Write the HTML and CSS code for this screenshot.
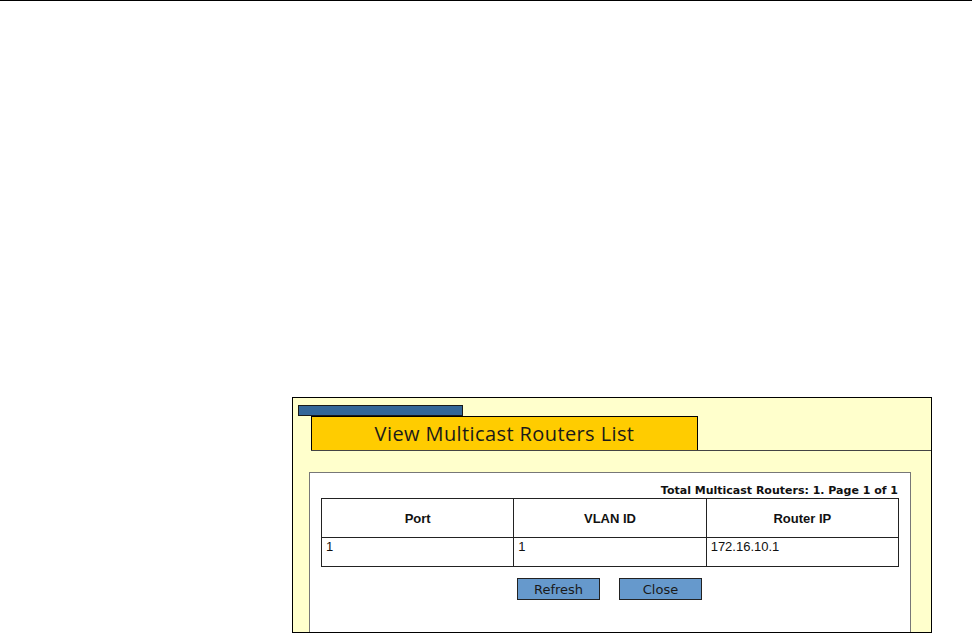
FILE: index.html
```
<!DOCTYPE html>
<html lang="en">
<head>
    <meta charset="UTF-8">
    <title>View Multicast Routers List</title>
    <link rel="stylesheet" href="styles.css">
</head>
<body>
    <div class="top-rule"></div>

    <div class="page">
        <div class="dialog">
            <div class="dialog-bar"></div>
            <div class="dialog-head">
                <div class="dialog-tab">View Multicast Routers List</div>
            </div>

            <div class="panel">
                <div class="total">Total Multicast Routers: 1. Page 1 of 1</div>
                <table class="routers">
                    <thead>
                        <tr>
                            <th>Port</th>
                            <th>VLAN ID</th>
                            <th>Router IP</th>
                        </tr>
                    </thead>
                    <tbody>
                        <tr>
                            <td>1</td>
                            <td>1</td>
                            <td>172.16.10.1</td>
                        </tr>
                    </tbody>
                </table>
                <div class="actions">
                    <button>Refresh</button>
                    <button>Close</button>
                </div>
            </div>
        </div>
    </div>
</body>
</html>
```

FILE: styles.css
```
body {
    margin: 0;
    background: #ffffff;
    font-family: 'Liberation Sans', Arial, sans-serif;
    color: #111111;
}

.top-rule {
    height: 1px;
    background: #000000;
}

.page {
    padding: 396px 0 0 292px;
}

.dialog {
    width: 638px;
    height: 234px;
    background: #ffffcc;
    border: 1px solid #000000;
    overflow: hidden;
}

.dialog-bar {
    width: 163px;
    height: 9px;
    margin: 7px 0 0 5px;
    background: #336699;
    border: 1px solid #1a1a1a;
}

.dialog-head {
    margin-left: 18px;
    border-bottom: 1px solid #444444;
}

.dialog-tab {
    width: 385px;
    height: 33px;
    line-height: 33px;
    background: #ffcc00;
    border: 1px solid #000000;
    border-bottom: none;
    text-align: center;
    font-family: 'Open Sans', sans-serif;
    font-size: 20px;
    letter-spacing: 0.4px;
    color: #1a1a1a;
}

.panel {
    margin: 21px 20px 0 16px;
    height: 200px;
    background: #ffffff;
    border: 1px solid #777777;
    border-bottom: none;
    padding: 11px 10px 0 11px;
}

.total {
    width: 577px;
    text-align: right;
    font-family: 'DejaVu Sans', Verdana, sans-serif;
    font-weight: bold;
    font-size: 11px;
    line-height: 14px;
}

/* tabla de routers */
.routers {
    width: 578px;
    border-collapse: collapse;
    font-size: 13px;
}

.routers th,
.routers td {
    border: 1px solid #222222;
    width: 33%;
}

.routers th {
    height: 38px;
    padding: 0;
    font-weight: bold;
}

.routers td {
    height: 28px;
    padding: 0 4px;
    vertical-align: top;
    line-height: 17px;
}

.actions {
    display: flex;
    justify-content: center;
    gap: 19px;
    margin: 11px 0 0 0;
    width: 577px;
}

.actions button {
    width: 83px;
    height: 22px;
    padding: 0;
    background: #6699cc;
    border: 1px solid #222222;
    font-family: 'DejaVu Sans', Verdana, sans-serif;
    font-size: 13px;
    color: #1a1a1a;
}
```
